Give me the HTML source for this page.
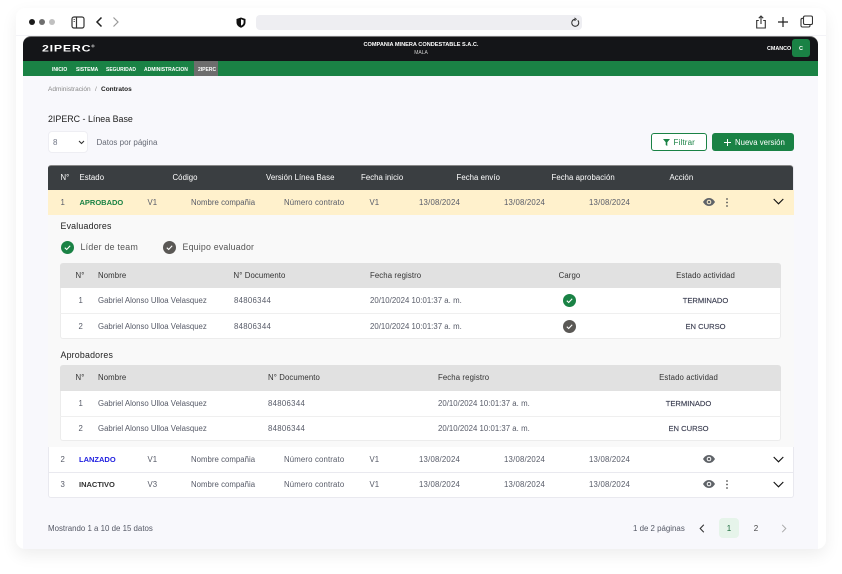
<!DOCTYPE html>
<html lang="es"><head><meta charset="utf-8"><style>
html,body{margin:0;padding:0;background:#fff}
body{width:842px;height:574px;overflow:hidden;position:relative;font-family:"Liberation Sans","DejaVu Sans",sans-serif;font-size:8px;color:#4f5360}
div,span,svg{position:absolute}
.t{white-space:nowrap;line-height:10px;transform:translateY(calc(-50% + .8px))}
.c{transform:translate(-50%,calc(-50% + .8px))}
.h{color:#fff;font-size:7.8px;letter-spacing:.05px}
.g{color:#333;font-size:7.8px;letter-spacing:.1px}
.d{font-size:7.8px;letter-spacing:.03px;color:#575b68}
.e{font-size:7.8px;letter-spacing:.2px;color:#575b68}
.b{font-weight:bold;font-size:7.5px}
.n{color:#fff;font-weight:bold;font-size:5px}
.s{font-size:7.6px;color:#3c3f52;-webkit-text-stroke:.15px #3c3f52}
</style></head><body>
<div style="left:16px;top:8px;width:810px;height:541px;background:#fff;border-radius:9px;box-shadow:0 6px 16px rgba(0,0,0,.07)"></div>
<div style="left:23px;top:36px;width:795px;height:513px;background:#f8f8fc;border-radius:8px 8px 0 0"></div>
<div style="left:16px;top:35px;width:810px;height:1px;background:#f3f3f7"></div>

<!-- browser toolbar -->
<div style="left:29px;top:19px;width:6px;height:6px;border-radius:50%;background:#1a1a1a"></div>
<div style="left:39px;top:19px;width:6px;height:6px;border-radius:50%;background:#6e6e6e"></div>
<div style="left:49px;top:19px;width:6px;height:6px;border-radius:50%;background:#c0c0c0"></div>
<svg style="left:71px;top:16px" width="14" height="13" viewBox="0 0 14 13" fill="none" stroke="#333" stroke-width="1.2"><rect x="1" y="1" width="12" height="11" rx="2"/><path d="M5.5 1v11"/><path d="M2.5 3.5h1.5M2.5 5.5h1.5" stroke-width=".8"/></svg>
<svg style="left:95px;top:16px" width="8" height="12" viewBox="0 0 8 12" fill="none" stroke="#222" stroke-width="1.5"><path d="M6.5 1.500 2 6l4.500 4.500"/></svg>
<svg style="left:112px;top:16px" width="8" height="12" viewBox="0 0 8 12" fill="none" stroke="#999" stroke-width="1.200"><path d="M1.500 1.500 6 6l-4.500 4.500"/></svg>
<svg style="left:236px;top:17px" width="10" height="11" viewBox="0 0 10 11"><path d="M5 .5 9.500 2v3.500C9.500 8 7.500 9.800 5 10.700 2.500 9.800.5 8 .5 5.500V2z" fill="#111"/><path d="M5 2.300 7.600 3.200v2.300C7.600 7 6.500 8 5 8.600z" fill="#fff"/></svg>
<div style="left:256px;top:15px;width:326px;height:15px;background:#eeeef2;border-radius:4px"></div>
<svg style="left:570px;top:17px" width="10" height="11" viewBox="0 0 10 11" fill="none" stroke="#333" stroke-width="1.100"><path d="M7.800 3.400A3.500 3.500 0 1 1 5 2.300"/><path d="M4.500.8 6.300 2.300 4.500 3.800" stroke-width=".9"/></svg>
<svg style="left:755px;top:15px" width="12" height="14" viewBox="0 0 12 14" fill="none" stroke="#333" stroke-width="1.100"><path d="M3.800 5.500H1.700v7.500h8.600V5.500H8.200"/><path d="M6 9V1.200M3.800 3.200 6 1l2.200 2.200"/></svg>
<svg style="left:777px;top:16px" width="12" height="12" viewBox="0 0 12 12" fill="none" stroke="#222" stroke-width="1.200"><path d="M6 1v10M1 6h10"/></svg>
<svg style="left:800px;top:15px" width="13" height="13" viewBox="0 0 13 13" fill="none" stroke="#333" stroke-width="1.100"><rect x="3.500" y="1" width="9" height="8.500" rx="1.500"/><path d="M3.200 3.300H2.500A1.500 1.500 0 0 0 1 4.800v6A1.500 1.500 0 0 0 2.500 12h6A1.500 1.500 0 0 0 10 10.500V9.800"/></svg>

<!-- app header -->
<div style="left:23px;top:36px;width:795px;height:25px;background:#141518;border-top:1px solid #777;box-sizing:border-box;border-radius:8px 8px 0 0"></div>
<div style="left:23px;top:61px;width:795px;height:15px;background:#1a8245"></div>
<div class="t" style="left:42px;top:47.500px;color:#fff;font-weight:bold;font-size:9.500px;letter-spacing:.6px;transform:translateY(-50%) scaleX(1.300);transform-origin:left center">2IPERC<span style="position:static;font-size:3.500px;vertical-align:super">®</span></div>
<div class="t c" style="left:421px;top:43.500px;color:#fff;font-weight:bold;font-size:5.600px">COMPANIA MINERA CONDESTABLE S.A.C.</div>
<div class="t c" style="left:421px;top:51.500px;color:#ccc;font-size:5px">MALA</div>
<div class="t" style="left:767px;top:48px;color:#fff;font-weight:bold;font-size:5.400px">CMANCO</div>
<div style="left:792px;top:39px;width:18px;height:18px;background:#1a8245;border-radius:3px"></div>
<div class="t c" style="left:801px;top:47.500px;color:#fff;font-weight:bold;font-size:5.500px">C</div>

<div style="left:194px;top:61px;width:24px;height:15px;background:#6d6d6d"></div>
<div class="t n" style="left:52px;top:69px">INICIO</div>
<div class="t n" style="left:76px;top:69px">SISTEMA</div>
<div class="t n" style="left:106px;top:69px">SEGURIDAD</div>
<div class="t n" style="left:144px;top:69px">ADMINISTRACION</div>
<div class="t n" style="left:198px;top:69px">2IPERC</div>

<div class="t" style="left:48px;top:89px;font-size:6.500px;color:#888">Administración</div>
<div class="t" style="left:95px;top:89px;font-size:6.500px;color:#888">/</div>
<div class="t" style="left:101px;top:89px;font-size:6.500px;color:#222;font-weight:bold">Contratos</div>

<div class="t" style="left:48px;top:118px;font-size:8.900px;color:#222">2IPERC - Línea Base</div>

<div style="left:48px;top:131px;width:40px;height:22px;background:#fff;border:1px solid #eeeef3;border-radius:4px;box-sizing:border-box"></div>
<div class="t" style="left:53px;top:142px;color:#707585;font-size:8px">8</div>
<svg style="left:78px;top:140px" width="7" height="5" viewBox="0 0 7 5" fill="none" stroke="#333" stroke-width="1.100"><path d="M1 1l2.500 2.500L6 1"/></svg>
<div class="t" style="left:96.500px;top:142px;font-size:8px;color:#666a75">Datos por página</div>

<div style="left:651px;top:133px;width:56px;height:18px;background:#fff;border:1px solid #1a8245;border-radius:3px;box-sizing:border-box"></div>
<svg style="left:663px;top:139px" width="7" height="7" viewBox="0 0 7 7"><path d="M0 0h7L4.300 3.300V7L2.700 6V3.300z" fill="#1a8245"/></svg>
<div class="t" style="left:673.500px;top:142px;font-size:8px;letter-spacing:.15px;color:#1a8245">Filtrar</div>
<div style="left:712px;top:133px;width:82px;height:18px;background:#1a8245;border-radius:3px"></div>
<svg style="left:724px;top:139px" width="7" height="7" viewBox="0 0 7 7" stroke="#fff" stroke-width="1"><path d="M3.500 0v7M0 3.500h7"/></svg>
<div class="t" style="left:735px;top:142px;font-size:7.800px;color:#fff">Nueva versión</div>

<!-- main table -->
<div style="left:48px;top:165px;width:746px;height:333px;background:#fff;border:1px solid #e9e9ef;border-top:0;border-radius:3px;box-sizing:border-box"></div>
<div style="left:48px;top:165px;width:745px;height:25px;background:#3a3e41;border-top:1px solid #888;box-sizing:border-box;border-radius:3px 3px 0 0"></div>
<div class="t h" style="left:60.500px;top:176.500px">N°</div>
<div class="t h" style="left:79.500px;top:176.500px">Estado</div>
<div class="t h" style="left:172.500px;top:176.500px">Código</div>
<div class="t h" style="left:266px;top:176.500px">Versión Línea Base</div>
<div class="t h" style="left:361px;top:176.500px">Fecha inicio</div>
<div class="t h" style="left:456.500px;top:176.500px">Fecha envío</div>
<div class="t h" style="left:551.500px;top:176.500px">Fecha aprobación</div>
<div class="t h" style="left:669.500px;top:176.500px">Acción</div>

<!-- row 1 -->
<div style="left:48px;top:190px;width:746px;height:25px;background:#fff1cc"></div>
<div class="t d" style="left:60.500px;top:201.500px">1</div>
<div class="t b" style="left:79.500px;top:201.500px;color:#1a8245">APROBADO</div>
<div class="t d" style="left:147.500px;top:201.500px">V1</div>
<div class="t d" style="left:191px;top:201.500px">Nombre compañia</div>
<div class="t d" style="left:284px;top:201.500px;letter-spacing:.15px">Número contrato</div>
<div class="t d" style="left:369.500px;top:201.500px">V1</div>
<div class="t e" style="left:419px;top:201.500px">13/08/2024</div>
<div class="t e" style="left:504px;top:201.500px">13/08/2024</div>
<div class="t e" style="left:589px;top:201.500px">13/08/2024</div>
<svg style="left:703px;top:198px" width="12" height="8" viewBox="0 0 12 8"><path d="M0 4C1.500 1.500 3.500 0 6 0s4.500 1.500 6 4c-1.500 2.500-3.500 4-6 4S1.500 6.500 0 4z" fill="#5f6368"/><circle cx="6" cy="4" r="2.300" fill="#fff1cc"/><circle cx="6" cy="4" r="1.300" fill="#5f6368"/></svg>
<svg style="left:725px;top:198px" width="4" height="9" viewBox="0 0 4 9" fill="#555"><circle cx="2" cy="1" r=".9"/><circle cx="2" cy="4.500" r=".9"/><circle cx="2" cy="8" r=".9"/></svg>
<svg style="left:773px;top:198px" width="11" height="7" viewBox="0 0 11 7" fill="none" stroke="#111" stroke-width="1.100"><path d="M.7 1l4.800 4.800L10.300 1"/></svg>

<!-- expanded -->
<div style="left:48px;top:215px;width:746px;height:232px;background:#f9f9f9"></div>
<div class="t" style="left:60.500px;top:224.500px;font-size:8.800px;letter-spacing:.2px;color:#222">Evaluadores</div>
<svg style="left:61px;top:241px" width="13" height="13" viewBox="0 0 13 13"><circle cx="6.500" cy="6.500" r="6.500" fill="#1a8245"/><path d="M3.800 6.700 5.700 8.500 9.200 4.800" fill="none" stroke="#fff" stroke-width="1.100"/></svg>
<div class="t" style="left:80.500px;top:245.500px;font-size:8.800px;letter-spacing:.25px;color:#555">Líder de team</div>
<svg style="left:163px;top:241px" width="13" height="13" viewBox="0 0 13 13"><circle cx="6.500" cy="6.500" r="6.500" fill="#5a5855"/><path d="M3.800 6.700 5.700 8.500 9.200 4.800" fill="none" stroke="#fff" stroke-width="1.100"/></svg>
<div class="t" style="left:182.500px;top:245.500px;font-size:8.800px;letter-spacing:.2px;color:#555">Equipo evaluador</div>

<!-- evaluators table -->
<div style="left:60px;top:263px;width:721px;height:76px;background:#fff;border:1px solid #ececec;border-top:0;border-radius:3px;box-sizing:border-box"></div>
<div style="left:60px;top:263px;width:721px;height:25px;background:#e1e1e1;border-radius:3px 3px 0 0"></div>
<div style="left:60px;top:313px;width:721px;height:1px;background:#efefef"></div>
<div class="t g" style="left:75.500px;top:275px">N°</div>
<div class="t g" style="left:98px;top:275px">Nombre</div>
<div class="t g" style="left:233.500px;top:275px">N° Documento</div>
<div class="t g" style="left:370px;top:275px">Fecha registro</div>
<div class="t g c" style="left:569.500px;top:275px">Cargo</div>
<div class="t g c" style="left:705.500px;top:275px">Estado actividad</div>

<div class="t d" style="left:78.500px;top:300px">1</div>
<div class="t d" style="left:98px;top:300px;letter-spacing:0">Gabriel Alonso Ulloa Velasquez</div>
<div class="t e" style="left:234px;top:300px;letter-spacing:.3px">84806344</div>
<div class="t d" style="left:370px;top:300px">20/10/2024 10:01:37 a. m.</div>
<svg style="left:563px;top:294px" width="13" height="13" viewBox="0 0 13 13"><circle cx="6.500" cy="6.500" r="6.500" fill="#1a8245"/><path d="M3.800 6.700 5.700 8.500 9.200 4.800" fill="none" stroke="#fff" stroke-width="1.100"/></svg>
<div class="t c s" style="left:705.500px;top:300px">TERMINADO</div>

<div class="t d" style="left:78.500px;top:325.500px">2</div>
<div class="t d" style="left:98px;top:325.500px;letter-spacing:0">Gabriel Alonso Ulloa Velasquez</div>
<div class="t e" style="left:234px;top:325.500px;letter-spacing:.3px">84806344</div>
<div class="t d" style="left:370px;top:325.500px">20/10/2024 10:01:37 a. m.</div>
<svg style="left:563px;top:320px" width="13" height="13" viewBox="0 0 13 13"><circle cx="6.500" cy="6.500" r="6.500" fill="#5a5855"/><path d="M3.800 6.700 5.700 8.500 9.200 4.800" fill="none" stroke="#fff" stroke-width="1.100"/></svg>
<div class="t c s" style="left:705.500px;top:325.500px">EN CURSO</div>

<div class="t" style="left:60.500px;top:353.500px;font-size:8.800px;letter-spacing:.2px;color:#222">Aprobadores</div>

<!-- approvers table -->
<div style="left:60px;top:365px;width:721px;height:76px;background:#fff;border:1px solid #ececec;border-top:0;border-radius:3px;box-sizing:border-box"></div>
<div style="left:60px;top:365px;width:721px;height:25.500px;background:#e1e1e1;border-radius:3px 3px 0 0"></div>
<div style="left:60px;top:416px;width:721px;height:1px;background:#efefef"></div>
<div class="t g" style="left:75.500px;top:377px">N°</div>
<div class="t g" style="left:98px;top:377px">Nombre</div>
<div class="t g" style="left:268px;top:377px">N° Documento</div>
<div class="t g" style="left:438px;top:377px">Fecha registro</div>
<div class="t g c" style="left:688.500px;top:377px">Estado actividad</div>

<div class="t d" style="left:78.500px;top:402.500px">1</div>
<div class="t d" style="left:98px;top:402.500px;letter-spacing:0">Gabriel Alonso Ulloa Velasquez</div>
<div class="t e" style="left:268px;top:402.500px;letter-spacing:.3px">84806344</div>
<div class="t d" style="left:438px;top:402.500px">20/10/2024 10:01:37 a. m.</div>
<div class="t c s" style="left:688.500px;top:402.500px">TERMINADO</div>

<div class="t d" style="left:78.500px;top:428px">2</div>
<div class="t d" style="left:98px;top:428px;letter-spacing:0">Gabriel Alonso Ulloa Velasquez</div>
<div class="t e" style="left:268px;top:428px;letter-spacing:.3px">84806344</div>
<div class="t d" style="left:438px;top:428px">20/10/2024 10:01:37 a. m.</div>
<div class="t c s" style="left:688.500px;top:428px">EN CURSO</div>

<!-- row 2 -->
<div style="left:48px;top:472px;width:746px;height:1px;background:#e9e9ef"></div>
<div class="t d" style="left:60.500px;top:458.500px">2</div>
<div class="t b" style="left:79px;top:458.500px;color:#1f1fe0">LANZADO</div>
<div class="t d" style="left:147.500px;top:458.500px">V1</div>
<div class="t d" style="left:191px;top:458.500px">Nombre compañia</div>
<div class="t d" style="left:284px;top:458.500px;letter-spacing:.15px">Número contrato</div>
<div class="t d" style="left:369.500px;top:458.500px">V1</div>
<div class="t e" style="left:419px;top:458.500px">13/08/2024</div>
<div class="t e" style="left:504px;top:458.500px">13/08/2024</div>
<div class="t e" style="left:589px;top:458.500px">13/08/2024</div>
<svg style="left:703px;top:455px" width="12" height="8" viewBox="0 0 12 8"><path d="M0 4C1.500 1.500 3.500 0 6 0s4.500 1.500 6 4c-1.500 2.500-3.500 4-6 4S1.500 6.500 0 4z" fill="#5f6368"/><circle cx="6" cy="4" r="2.300" fill="#fff"/><circle cx="6" cy="4" r="1.300" fill="#5f6368"/></svg>
<svg style="left:773px;top:456px" width="11" height="7" viewBox="0 0 11 7" fill="none" stroke="#111" stroke-width="1.100"><path d="M.7 1l4.800 4.800L10.300 1"/></svg>

<!-- row 3 -->
<div class="t d" style="left:60.500px;top:484px">3</div>
<div class="t b" style="left:79px;top:484px;color:#333">INACTIVO</div>
<div class="t d" style="left:147.500px;top:484px">V3</div>
<div class="t d" style="left:191px;top:484px">Nombre compañia</div>
<div class="t d" style="left:284px;top:484px;letter-spacing:.15px">Número contrato</div>
<div class="t d" style="left:369.500px;top:484px">V1</div>
<div class="t e" style="left:419px;top:484px">13/08/2024</div>
<div class="t e" style="left:504px;top:484px">13/08/2024</div>
<div class="t e" style="left:589px;top:484px">13/08/2024</div>
<svg style="left:703px;top:480px" width="12" height="8" viewBox="0 0 12 8"><path d="M0 4C1.500 1.500 3.500 0 6 0s4.500 1.500 6 4c-1.500 2.500-3.500 4-6 4S1.500 6.500 0 4z" fill="#5f6368"/><circle cx="6" cy="4" r="2.300" fill="#fff"/><circle cx="6" cy="4" r="1.300" fill="#5f6368"/></svg>
<svg style="left:725px;top:480px" width="4" height="9" viewBox="0 0 4 9" fill="#555"><circle cx="2" cy="1" r=".9"/><circle cx="2" cy="4.500" r=".9"/><circle cx="2" cy="8" r=".9"/></svg>
<svg style="left:773px;top:481px" width="11" height="7" viewBox="0 0 11 7" fill="none" stroke="#111" stroke-width="1.100"><path d="M.7 1l4.800 4.800L10.300 1"/></svg>

<!-- footer -->
<div class="t" style="left:48px;top:527.500px;font-size:7.900px;color:#555966">Mostrando 1 a 10 de 15 datos</div>
<div class="t" style="left:633px;top:527.500px;font-size:7.900px;color:#555966">1 de 2 páginas</div>
<svg style="left:699px;top:524px" width="6" height="9" viewBox="0 0 6 9" fill="none" stroke="#333" stroke-width="1.100"><path d="M4.800 .8 1.200 4.500l3.600 3.700"/></svg>
<div style="left:719px;top:518px;width:20px;height:20px;background:#e6f4ea;border-radius:4px"></div>
<div class="t c" style="left:729px;top:527.500px;font-size:8px;color:#1a6b3c">1</div>
<div class="t c" style="left:756px;top:527.500px;font-size:8px;color:#444">2</div>
<svg style="left:781px;top:524px" width="6" height="9" viewBox="0 0 6 9" fill="none" stroke="#aaa" stroke-width="1"><path d="M1.200 .8 4.800 4.500 1.200 8.200"/></svg>
</body></html>
